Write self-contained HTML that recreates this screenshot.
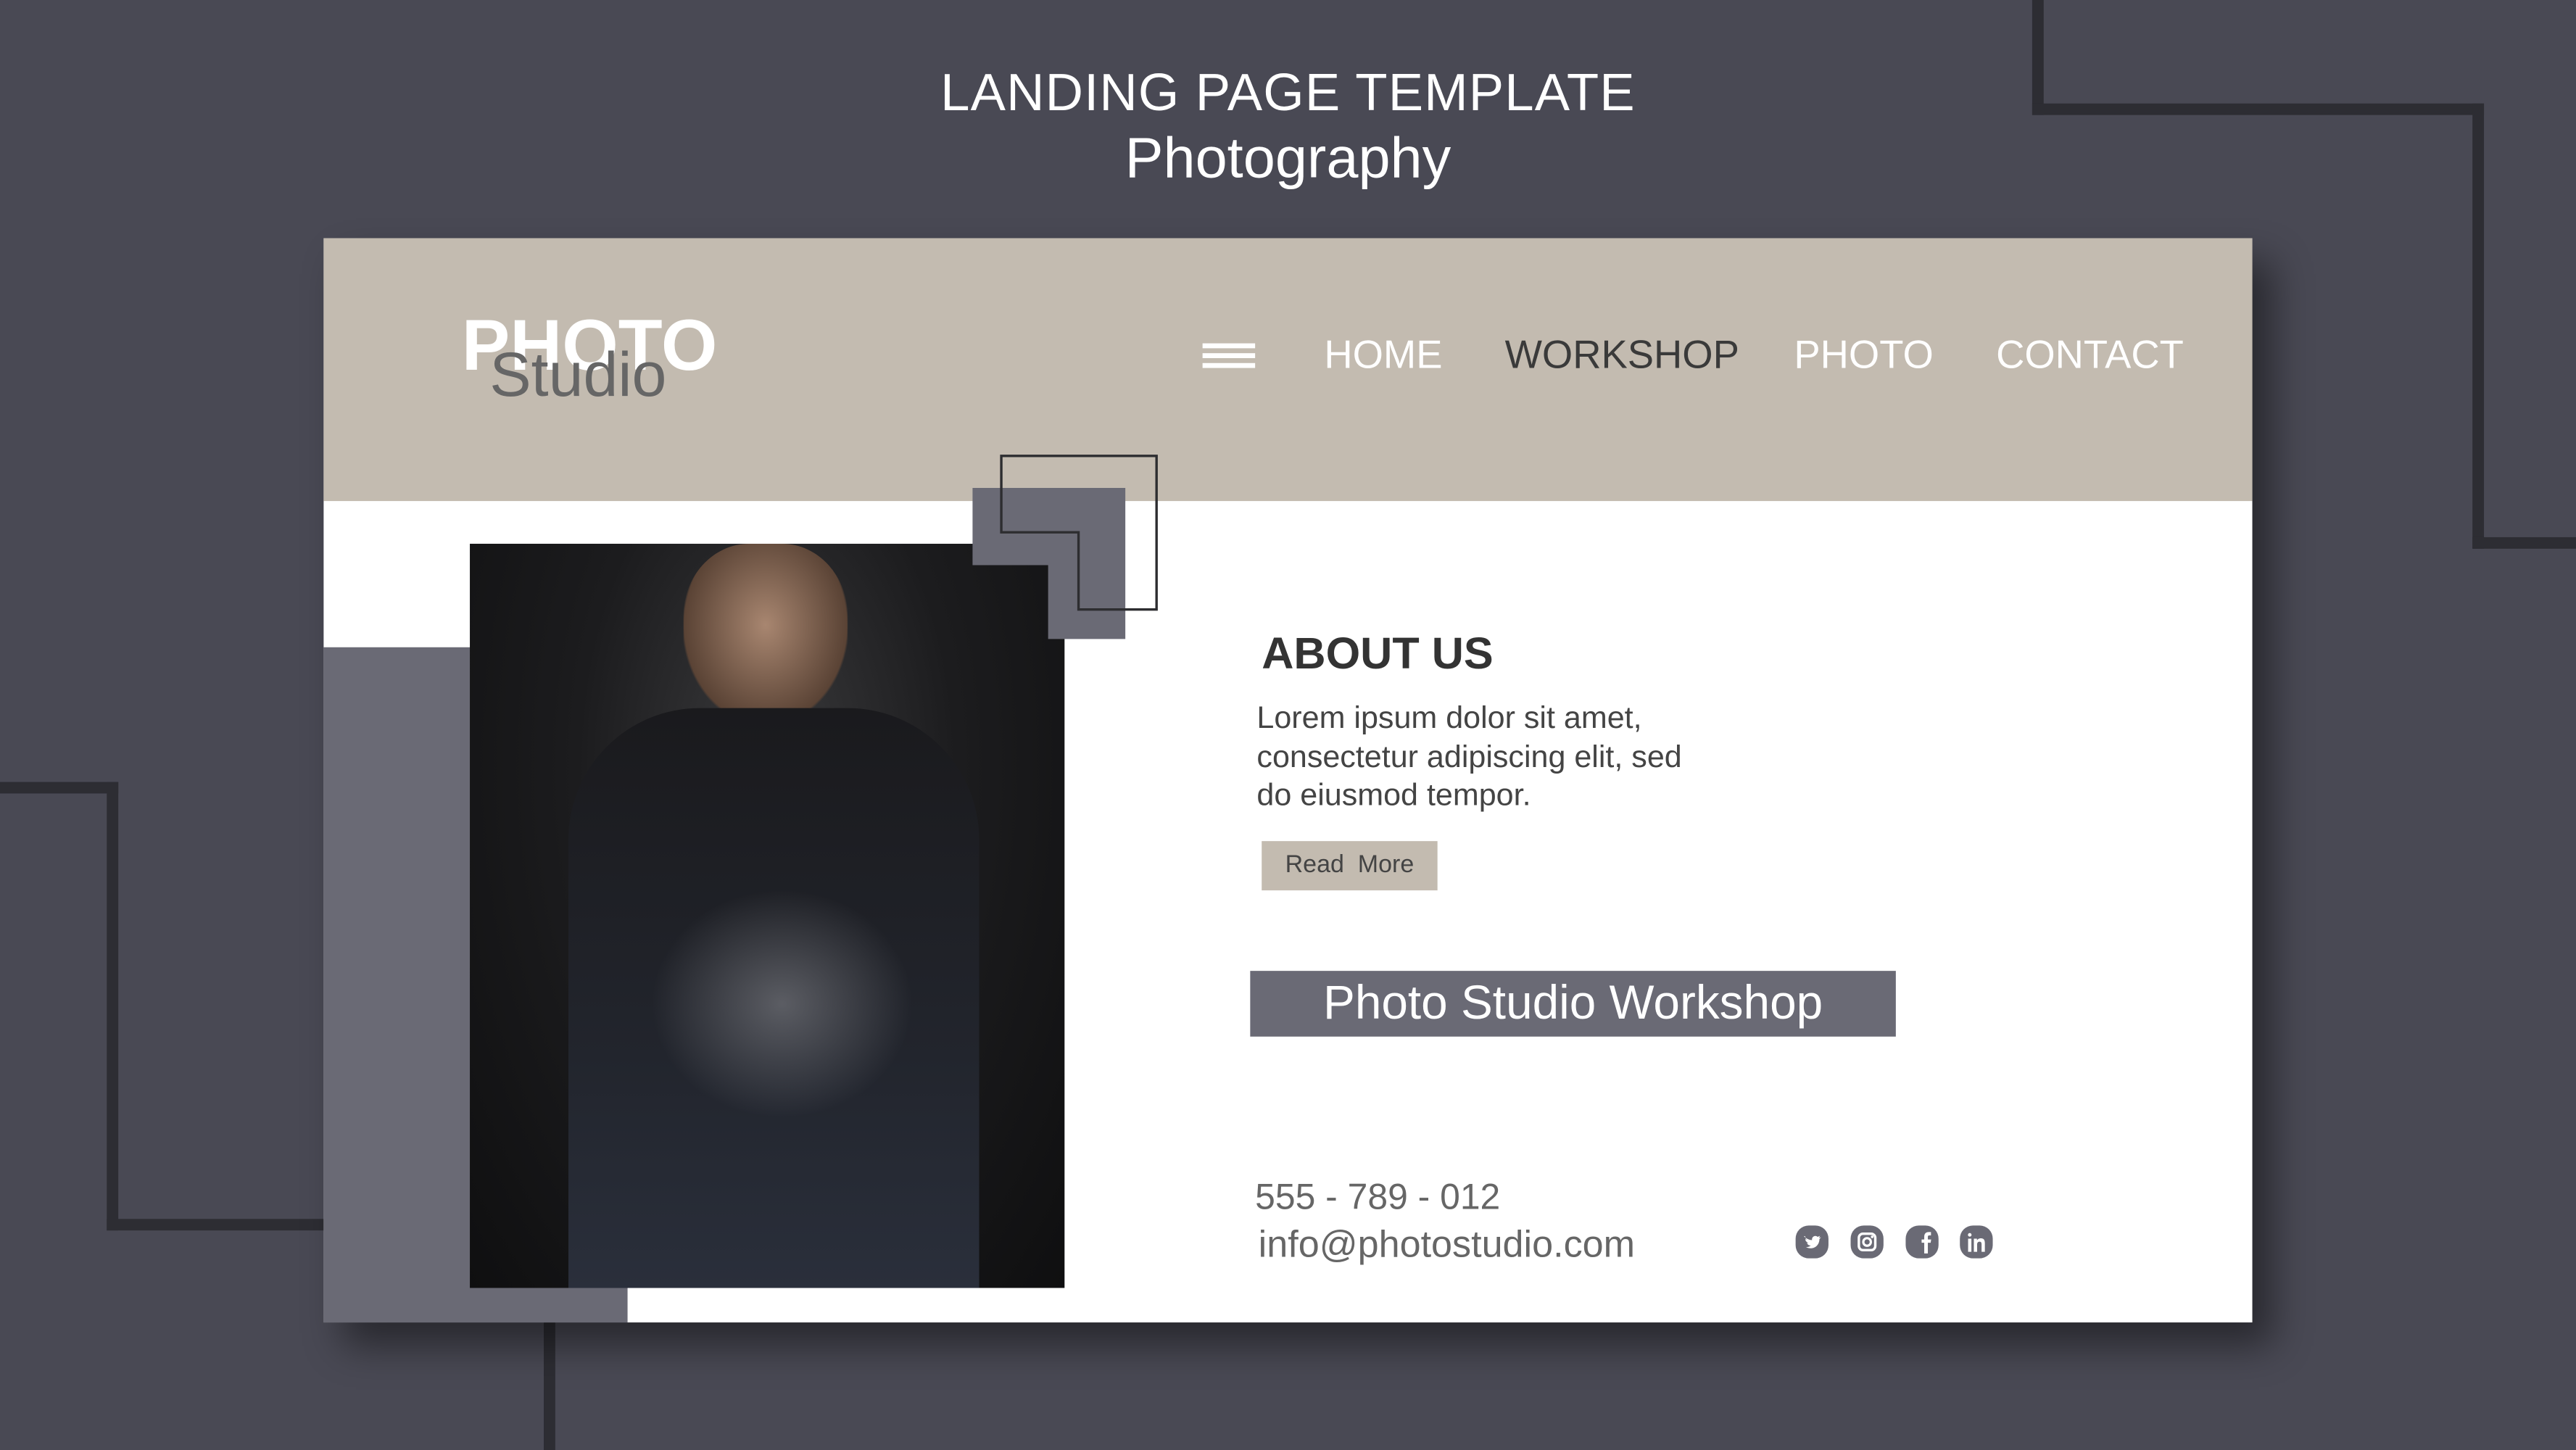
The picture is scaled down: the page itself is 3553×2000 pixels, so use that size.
<!DOCTYPE html>
<html><head><meta charset="utf-8"><style>
html,body{margin:0;padding:0;background:#494954;overflow:hidden;}
body{width:3553px;height:2000px;position:relative;font-family:"Liberation Sans",sans-serif;}
#w{position:absolute;left:0;top:0;width:1568px;height:883px;transform:scale(2.2659);transform-origin:0 0;}
.a{position:absolute;white-space:nowrap;}
.ln{position:absolute;background:#2d2d33;}
</style></head><body><div id="w">
<div class="ln" style="left:1237px;top:0;width:7px;height:70px"></div>
<div class="ln" style="left:1237px;top:63px;width:275px;height:7px"></div>
<div class="ln" style="left:1505px;top:63px;width:7px;height:271px"></div>
<div class="ln" style="left:1505px;top:327px;width:63px;height:7px"></div>
<div class="ln" style="left:0;top:476px;width:72px;height:7px"></div>
<div class="ln" style="left:65px;top:476px;width:7px;height:273px"></div>
<div class="ln" style="left:65px;top:742px;width:140px;height:7px"></div>
<div class="ln" style="left:331px;top:800px;width:7px;height:83px"></div>

<div class="a" style="left:0;width:1568px;text-align:center;top:38px;font-size:32px;color:#fff;letter-spacing:0.5px">LANDING PAGE TEMPLATE</div>
<div class="a" style="left:0;width:1568px;text-align:center;top:77px;font-size:35px;color:#fff;font-weight:300">Photography</div>

<div class="a" style="left:197px;top:145px;width:1174px;height:660px;background:#fff;box-shadow:12px 14px 22px rgba(0,0,0,0.45)"></div>
<div class="a" style="left:197px;top:145px;width:1174px;height:160px;background:#c3bbb0"></div>
<div class="a" style="left:197px;top:394px;width:185px;height:411px;background:#6a6a75"></div>
<div class="a" style="left:286px;top:331px;width:362px;height:453px;background:radial-gradient(ellipse at 50% 30%,#3a3a3c 0%,#1c1c1e 45%,#0f0f10 100%)">
 <div class="a" style="left:130px;top:0;width:100px;height:110px;border-radius:40% 40% 45% 45%;background:radial-gradient(ellipse at 50% 45%,#a88670,#5a4335 70%,transparent 72%)"></div>
 <div class="a" style="left:60px;top:100px;width:250px;height:353px;border-radius:80px 80px 0 0;background:linear-gradient(#1a1a1d,#22252d 60%,#2a2f3b)"></div>
 <div class="a" style="left:110px;top:210px;width:160px;height:140px;border-radius:50%;background:radial-gradient(ellipse,rgba(200,200,205,0.35),transparent 70%)"></div>
</div>
<svg class="a" style="left:0;top:0" width="1568" height="883">
 <path d="M592 297H685V389H638V344H592Z" fill="#6a6a75"/>
 <path d="M609.5 277.5H704V371H656.5V324H609.5Z" fill="none" stroke="#2d2d30" stroke-width="1.5"/>
</svg>

<div class="a" style="left:281px;top:186px;font-size:44px;font-weight:bold;color:#fff">PHOTO</div>
<div class="a" style="left:298px;top:208px;font-size:38px;color:#666">Studio</div>
<div class="a" style="left:732px;top:209px;width:32px;height:3px;background:#fff;box-shadow:0 6px 0 #fff,0 12px 0 #fff"></div>
<div class="a" style="left:806px;top:203px;font-size:24px;color:#fff">HOME</div>
<div class="a" style="left:916px;top:203px;font-size:24px;color:#3a3a3a">WORKSHOP</div>
<div class="a" style="left:1092px;top:203px;font-size:24px;color:#fff">PHOTO</div>
<div class="a" style="left:1215px;top:203px;font-size:24px;color:#fff">CONTACT</div>

<div class="a" style="left:768px;top:383px;font-size:27px;font-weight:bold;color:#333">ABOUT US</div>
<div class="a" style="left:765px;top:426px;font-size:19px;line-height:23.5px;color:#444">Lorem ipsum dolor sit amet,<br>consectetur adipiscing elit, sed<br>do eiusmod tempor.</div>
<div class="a" style="left:768px;top:512px;width:107px;height:30px;background:#c3bbb0;color:#444;font-size:15px;line-height:30px;text-align:center">Read&nbsp; More</div>
<div class="a" style="left:761px;top:591px;width:393px;height:40px;background:#6a6a75;color:#fff;font-size:29px;line-height:40px;text-align:center">Photo Studio Workshop</div>
<div class="a" style="left:764px;top:716px;font-size:22px;color:#666">555 - 789 - 012</div>
<div class="a" style="left:766px;top:744px;font-size:23px;color:#666">info@photostudio.com</div>

<svg class="a" style="left:1090px;top:743px" width="130" height="26" viewBox="0 0 130 26">
 <g fill="#6a6a75">
  <rect x="3" y="3" width="20" height="20" rx="8"/><rect x="36.5" y="3" width="20" height="20" rx="8"/>
  <rect x="70" y="3" width="20" height="20" rx="8"/><rect x="103" y="3" width="20" height="20" rx="8"/>
 </g>
 <path d="M8 9.5c1.5 1.5 3.3 2.3 5 2.4-.3-2 1.8-3.4 3.4-2l1.5-.6-.7 1.2 1.3-.3-1 1c0 4-3.5 7-8.3 5 1.4 0 2.3-.4 3-1-1.2 0-2-.7-2.3-1.6h1c-1.3-.4-2-1.3-2-2.3l1 .3c-1-.7-1.3-1.8-.9-2.1z" fill="#fff"/>
 <rect x="41.5" y="8" width="10" height="10" rx="2.5" fill="none" stroke="#fff" stroke-width="1.5"/>
 <circle cx="46.5" cy="13" r="2.3" fill="none" stroke="#fff" stroke-width="1.4"/><circle cx="49.6" cy="9.9" r=".8" fill="#fff"/>
 <path d="M81.3 20v-6.5h-1.6v-2h1.6v-1.6c0-2 1-2.9 2.8-2.9h1.3v2h-1c-.7 0-.9.3-.9.9v1.6h2l-.3 2h-1.7V20z" fill="#fff"/>
 <path d="M108 11h2v8h-2zM109 7.6a1.1 1.1 0 1 1 0 2.2a1.1 1.1 0 1 1 0-2.2zM111.5 11h1.9v1.1c.4-.8 1.3-1.3 2.4-1.3 1.8 0 2.4 1.1 2.4 3V19h-2v-4.6c0-1-.3-1.6-1.2-1.6s-1.5.6-1.5 1.7V19h-2z" fill="#fff"/>
</svg>
</div></body></html>
